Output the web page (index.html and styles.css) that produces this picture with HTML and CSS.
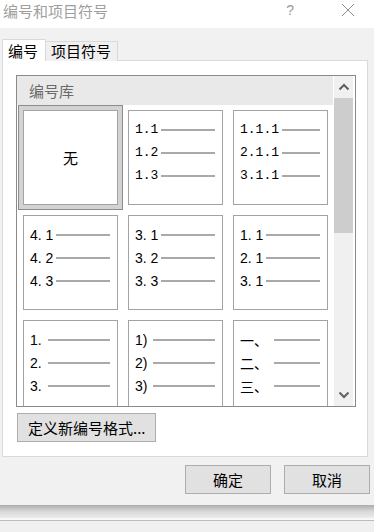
FILE: index.html
```html
<!DOCTYPE html>
<html lang="zh-CN">
<head>
<meta charset="utf-8">
<title>编号和项目符号</title>
<link rel="stylesheet" href="styles.css">
</head>
<body>
<div class="dialog">
  <div class="titlebar">
    <span class="title">编号和项目符号</span>
    <span class="help">?</span>
    <svg class="close" width="14" height="14" viewBox="0 0 14 14"><path d="M1 1 L13 13 M13 1 L1 13" stroke="#8f8f8f" stroke-width="1" fill="none"/></svg>
  </div>
  <div class="tabs">
    <div class="tab active">编号</div>
    <div class="tab">项目符号</div>
  </div>
  <div class="panel">
    <div class="listbox">
      <div class="listcontent">
        <div class="listhead">编号库</div>
        <div class="grid">
          <div class="cell selected"><span class="none">无</span></div>
          <div class="cell mono">
            <div class="row"><span class="lbl w26">1.1</span><span class="ln"></span></div>
            <div class="row"><span class="lbl w26">1.2</span><span class="ln"></span></div>
            <div class="row"><span class="lbl w26">1.3</span><span class="ln"></span></div>
          </div>
          <div class="cell mono">
            <div class="row"><span class="lbl w42">1.1.1</span><span class="ln"></span></div>
            <div class="row"><span class="lbl w42">2.1.1</span><span class="ln"></span></div>
            <div class="row"><span class="lbl w42">3.1.1</span><span class="ln"></span></div>
          </div>
          <div class="cell sans">
            <div class="row"><span class="lbl w26">4. 1</span><span class="ln"></span></div>
            <div class="row"><span class="lbl w26">4. 2</span><span class="ln"></span></div>
            <div class="row"><span class="lbl w26">4. 3</span><span class="ln"></span></div>
          </div>
          <div class="cell sans">
            <div class="row"><span class="lbl w26">3. 1</span><span class="ln"></span></div>
            <div class="row"><span class="lbl w26">3. 2</span><span class="ln"></span></div>
            <div class="row"><span class="lbl w26">3. 3</span><span class="ln"></span></div>
          </div>
          <div class="cell sans">
            <div class="row"><span class="lbl w26">1. 1</span><span class="ln"></span></div>
            <div class="row"><span class="lbl w26">2. 1</span><span class="ln"></span></div>
            <div class="row"><span class="lbl w26">3. 1</span><span class="ln"></span></div>
          </div>
          <div class="cell sans">
            <div class="row"><span class="lbl w18">1.</span><span class="ln"></span></div>
            <div class="row"><span class="lbl w18">2.</span><span class="ln"></span></div>
            <div class="row"><span class="lbl w18">3.</span><span class="ln"></span></div>
          </div>
          <div class="cell sans">
            <div class="row"><span class="lbl w18">1)</span><span class="ln"></span></div>
            <div class="row"><span class="lbl w18">2)</span><span class="ln"></span></div>
            <div class="row"><span class="lbl w18">3)</span><span class="ln"></span></div>
          </div>
          <div class="cell cjk">
            <div class="row"><span class="lbl w34">一、</span><span class="ln"></span></div>
            <div class="row"><span class="lbl w34">二、</span><span class="ln"></span></div>
            <div class="row"><span class="lbl w34">三、</span><span class="ln"></span></div>
          </div>
        </div>
      </div>
      <div class="scrollbar">
        <div class="sbtn"><svg width="12" height="8" viewBox="0 0 12 8"><path d="M1.5 6.5 L6 2 L10.5 6.5" stroke="#606060" stroke-width="2" fill="none"/></svg></div>
        <div class="track"><div class="thumb"></div></div>
        <div class="sbtn"><svg width="12" height="8" viewBox="0 0 12 8"><path d="M1.5 1.5 L6 6 L10.5 1.5" stroke="#606060" stroke-width="2" fill="none"/></svg></div>
      </div>
    </div>
    <div class="btn define">定义新编号格式...</div>
  </div>
  <div class="footer">
    <div class="btn act">确定</div>
    <div class="btn act">取消</div>
  </div>
</div>
<div class="below">
  <div class="shadow"></div>
  <div class="strip"></div>
  <div class="sep"></div>
</div>
</body>
</html>
```
FILE: styles.css
```css
* { box-sizing: border-box; }
html, body { margin: 0; padding: 0; }
body {
  width: 374px;
  height: 532px;
  overflow: hidden;
  background: #f0f0f0;
  font-family: "Noto Sans CJK SC", "Liberation Sans", sans-serif;
  color: #000;
}
.dialog {
  height: 505px;
  background: #f0f1f0;
  display: flex;
  flex-direction: column;
}
.titlebar {
  height: 28px;
  flex: none;
  background: #fff;
  display: flex;
  align-items: flex-start;
}
.title {
  font-size: 15px;
  line-height: 21px;
  color: #9e9e9e;
  padding-left: 3px;
}
.help {
  font-family: "Liberation Sans", sans-serif;
  font-size: 14px;
  line-height: 21px;
  color: #9a9a9a;
  margin-left: auto;
  margin-right: 47px;
}
.close {
  margin-top: 3px;
  margin-right: 19px;
}
.tabs {
  display: flex;
  align-items: flex-end;
  height: 22px;
  margin: 11px 0 -1px 2px;
  position: relative;
  z-index: 1;
}
.tab {
  height: 20px;
  width: 72px;
  background: #f0f0f0;
  border: 1px solid #d9d9d9;
  border-left: none;
  border-bottom: none;
  font-size: 15px;
  line-height: 18px;
  padding-left: 5px;
}
.tab.active {
  height: 22px;
  width: 44px;
  background: #fff;
  border-left: 1px solid #d9d9d9;
  padding-left: 5px;
  line-height: 21px;
}
.panel {
  margin-left: 2px;
  width: 366px;
  height: 397px;
  flex: none;
  background: #fff;
  border: 1px solid #d9d9d9;
  padding: 14px 0 0 13px;
}
.listbox {
  width: 340px;
  height: 332px;
  border: 1px solid #8a8a8a;
  display: flex;
}
.listcontent {
  width: 316px;
  margin-right: 1px;
  overflow: hidden;
}
.listhead {
  height: 29px;
  background: #e9e9e9;
  font-size: 15px;
  line-height: 29px;
  color: #6a6a6a;
  padding-left: 12px;
}
.grid {
  display: grid;
  grid-template-columns: repeat(3, 95px);
  grid-auto-rows: 95px;
  gap: 10px;
  padding: 5px 0 0 6px;
}
.cell {
  border: 1px solid #a3a3a3;
  background: #fff;
  padding: 7px 7px 0 6px;
}
.cell.selected {
  box-shadow: 0 0 0 4px #d3d3d3, 0 0 0 5px #8c8c8c;
  display: flex;
  align-items: center;
  justify-content: center;
  padding: 0;
}
.none {
  font-size: 15px;
  line-height: 20px;
}
.row {
  height: 23px;
  display: flex;
  align-items: center;
}
.lbl {
  flex: none;
  white-space: pre;
  line-height: 20px;
}
.w18 { width: 18px; }
.w26 { width: 26px; }
.w34 { width: 34px; }
.w42 { width: 42px; }
.mono .lbl { font-family: "Liberation Mono", monospace; font-size: 13px; }
.sans .lbl { font-family: "Liberation Sans", sans-serif; font-size: 14px; }
.cjk .lbl { font-family: "Noto Sans CJK SC", sans-serif; font-size: 14px; }
.ln {
  flex: 1;
  height: 2px;
  background: #a9a9a9;
}
.scrollbar {
  width: 19px;
  margin-right: 2px;
  background: #f0f0f0;
  display: flex;
  flex-direction: column;
}
.sbtn {
  height: 22px;
  display: flex;
  align-items: center;
  justify-content: center;
}
.sbtn svg { display: block; }
.track { flex: 1; }
.thumb {
  height: 135px;
  background: #cdcdcd;
}
.btn {
  background: #e1e1e1;
  border: 1px solid #adadad;
  font-size: 15px;
  line-height: 27px;
}
.define {
  width: 139px;
  height: 29px;
  margin: 6px 0 0 1px;
  padding-left: 10px;
}
.footer {
  display: flex;
  justify-content: flex-end;
  gap: 13px;
  padding: 8px 4px 0 0;
}
.act {
  width: 86px;
  height: 29px;
  text-align: center;
}
.below { height: 27px; }
.shadow {
  height: 13px;
  background: linear-gradient(#adadad, #d8d8d8 50%, #ececec);
}
.strip { height: 2px; background: #f8f8f8; }
.sep { height: 1px; background: #bcbcbc; }
```
